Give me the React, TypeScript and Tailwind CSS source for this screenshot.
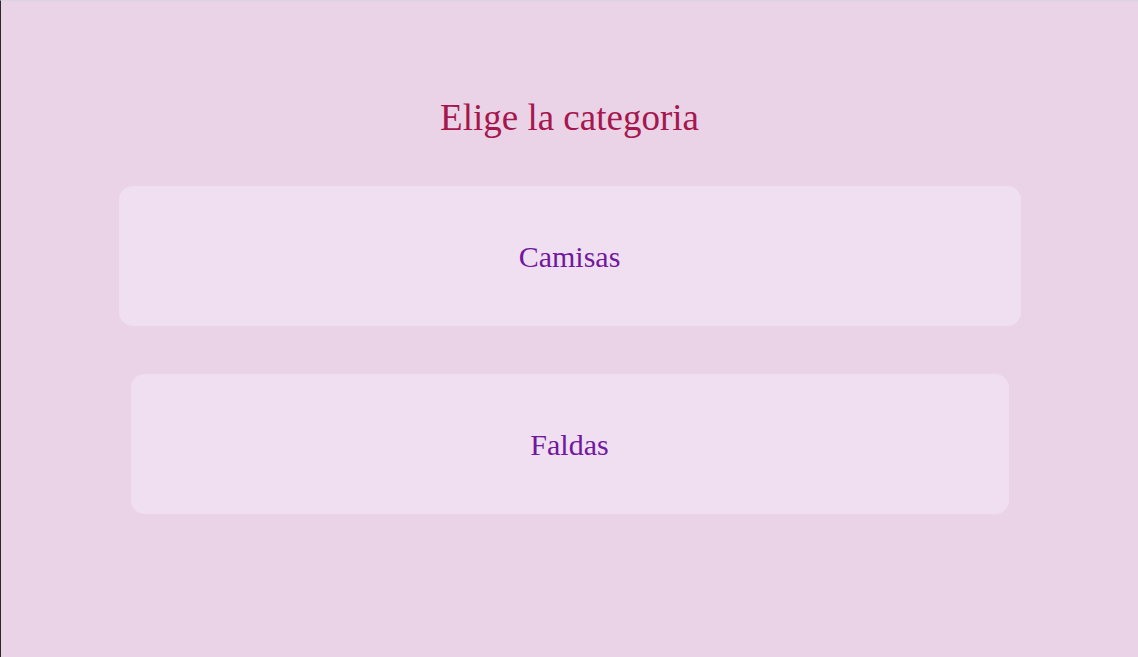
const categories = [
  { name: "Camisas", width: "w-[902px]" },
  { name: "Faldas", width: "w-[878px]" },
];

export default function App() {
  return (
    <div className="min-h-screen w-full bg-[#ead3e7] border-t border-t-[#d5d6de] border-l border-l-[#2a2a2a] font-['Liberation_Serif',serif]">
      <div className="flex flex-col items-center pt-[95px]">
        <h1 className="text-[37px] leading-[44px] text-[#a5174d] mb-[46px]">
          Elige la categoria
        </h1>

        <div className="flex flex-col items-center gap-[48px]">
          {categories.map((cat) => (
            <button
              key={cat.name}
              className={`${cat.width} h-[140px] rounded-[14px] bg-[#f0dff0] flex items-center justify-center text-[30px] text-[#7118a0]`}
            >
              {cat.name}
            </button>
          ))}
        </div>
      </div>
    </div>
  );
}
